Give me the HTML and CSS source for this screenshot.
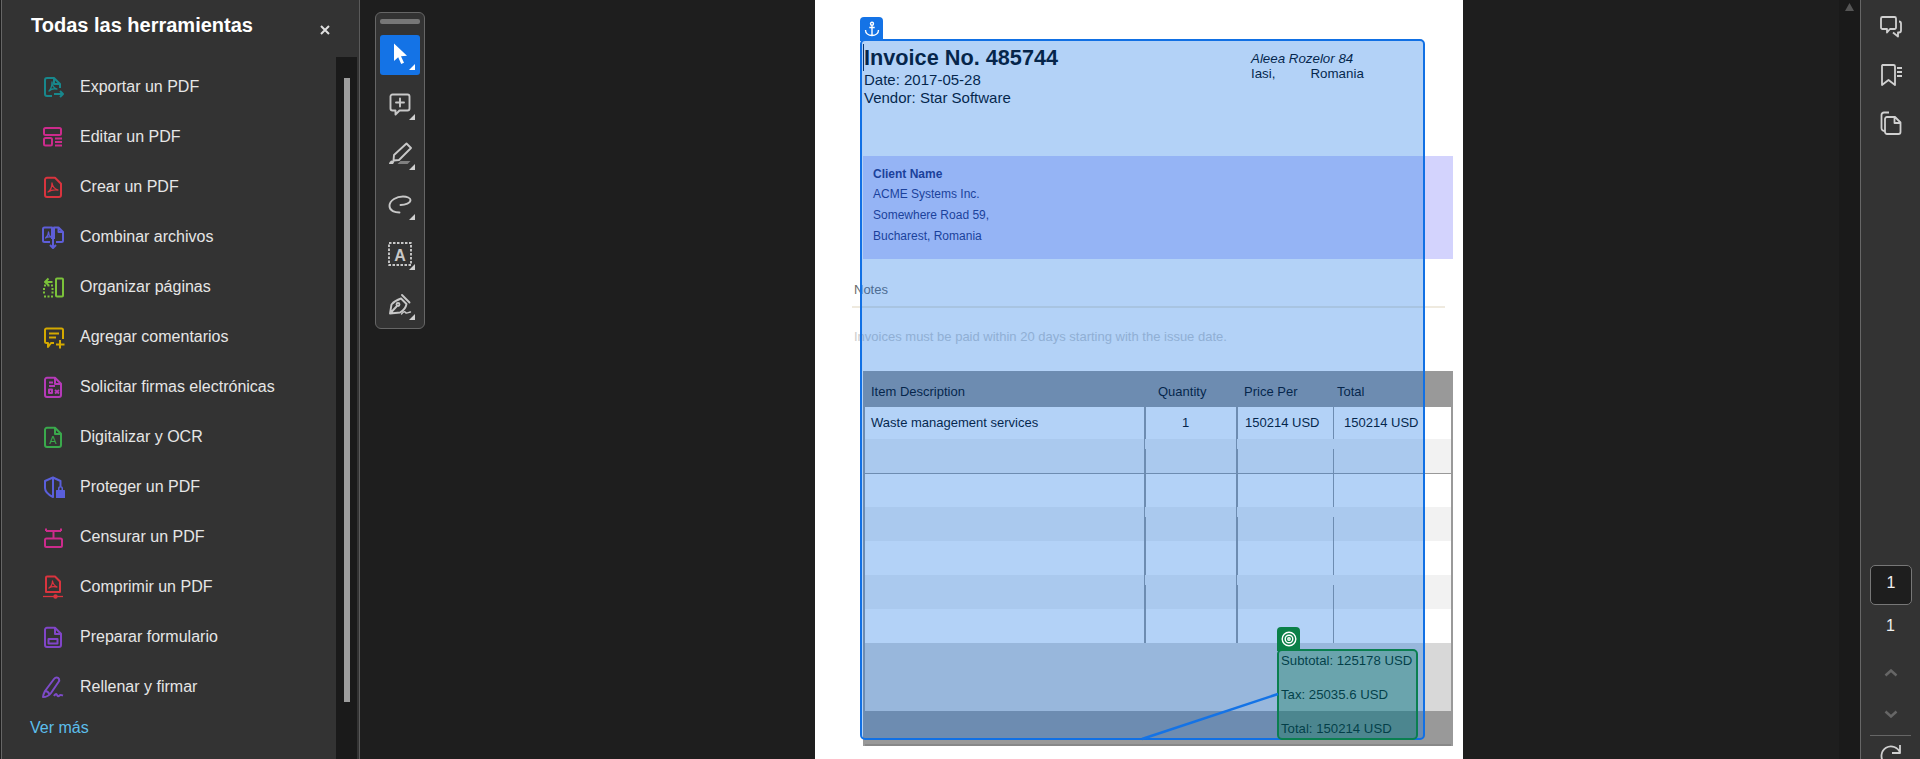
FILE: index.html

```html
<!DOCTYPE html>
<html lang="es">
<head>
    <meta charset="UTF-8">
    <title>Todas las herramientas</title>
    <link rel="stylesheet" href="styles.css">
</head>
<body>
    <aside class="sidebar">
        <div class="side-head">
            <h1 class="side-title">Todas las herramientas</h1>
            <svg class="close" viewBox="0 0 10 10"><path d="M1 1l8 8M9 1l-8 8"/></svg>
        </div>
        <div class="side-body">
            <div class="tool-list">
                <div class="tool-item">
                    <svg class="ico" style="color:#18878c" viewBox="0 0 24 24"><path d="M11 21H6a2 2 0 0 1-2-2V5a2 2 0 0 1 2-2h7l6 6v4M13 3v6h6"/><path class="thin" d="M8 16c2-2 3-6 3-9 0 3 2 6 5 7-3-.6-6 0-8 2z"/><path d="M13 19h9M19 16l3 3-3 3"/></svg>
                    <span>Exportar un PDF</span>
                </div>
                <div class="tool-item">
                    <svg class="ico" style="color:#cc2b8c" viewBox="0 0 24 24"><rect x="3" y="3" width="17" height="7" rx="1.5"/><rect x="3" y="13" width="8" height="7.5" rx="1.5"/><path d="M14 13.5h7M14 17h7M14 20.5h7"/></svg>
                    <span>Editar un PDF</span>
                </div>
                <div class="tool-item">
                    <svg class="ico" style="color:#d9343e" viewBox="0 0 24 24"><path d="M6 2.800h8l6 6V20a2 2 0 0 1-2 2H6a2 2 0 0 1-2-2V4.800a2 2 0 0 1 2-2z"/><path class="thin" d="M7 17c3-2 4-5 4-9 .5 4 3 6 6 7-3.500-.5-7 0-10 2z"/></svg>
                    <span>Crear un PDF</span>
                </div>
                <div class="tool-item">
                    <svg class="ico" style="color:#5e5ed8" viewBox="0 0 24 24"><path d="M9 17H3.500a1.500 1.500 0 0 1-1.500-1.500V4a1.500 1.500 0 0 1 1.500-1.500H11V14M15 17h5.500a1.500 1.500 0 0 0 1.500-1.500V7l-4.500-4.500H13V14M17.500 3v4H22"/><path class="thin" d="M4.500 13c2-1.500 3-3.500 3-6 0 2 1 4 2.500 5-2-.3-4 0-5.500 1z"/><path d="M12 12v11M9 20l3 3 3-3"/></svg>
                    <span>Combinar archivos</span>
                </div>
                <div class="tool-item">
                    <svg class="ico" style="color:#7bc23a" viewBox="0 0 24 24"><rect x="15" y="3.500" width="7" height="18" rx="1"/><path class="dots" d="M3 10.500h9M3 21.500h9M3 13v6M11.500 13v6"/><path d="M11.500 7H5M7.500 3.500 4 7l3.500 3"/></svg>
                    <span>Organizar páginas</span>
                </div>
                <div class="tool-item">
                    <svg class="ico" style="color:#d4a900" viewBox="0 0 24 24"><path d="M13 18H10l-3 4v-4H5.500A1.500 1.500 0 0 1 4 16.500V5a1.500 1.500 0 0 1 1.500-1.500h15A1.500 1.500 0 0 1 22 5v9"/><path d="M8 8.500h10M8 12.500h7M19 15v8.500M15 19.500h8.500"/></svg>
                    <span>Agregar comentarios</span>
                </div>
                <div class="tool-item">
                    <svg class="ico" style="color:#b53ab8" viewBox="0 0 24 24"><path d="M6 2.800h8l6 6V20a2 2 0 0 1-2 2H6a2 2 0 0 1-2-2V4.800a2 2 0 0 1 2-2z"/><path d="M14 3v6h6M8 7.500h4M8 11h6M8 14.500h3v3.500H8zM14 15l4 3.500M18 15l-4 3.500"/></svg>
                    <span>Solicitar firmas electrónicas</span>
                </div>
                <div class="tool-item">
                    <svg class="ico" style="color:#3aa94c" viewBox="0 0 24 24"><path d="M6 2.800h8l6 6V20a2 2 0 0 1-2 2H6a2 2 0 0 1-2-2V4.800a2 2 0 0 1 2-2z"/><path d="M14 3v6h6"/><text class="ico-letter" x="12" y="19" fill="currentColor">A</text></svg>
                    <span>Digitalizar y OCR</span>
                </div>
                <div class="tool-item">
                    <svg class="ico" style="color:#5a5fdb" viewBox="0 0 24 24"><path d="M12 2.500 19.500 6v5M12 2.500 4 6v7c0 4 4 7 8 9V2.500zM12 22"/><path class="fill" d="M15.500 15h8a.5.5 0 0 1 .5.5V23h-9v-7.500a.5.5 0 0 1 .5-.5zM17 15v-1.500a2.500 2.500 0 0 1 5 0V15h-1.500v-1.500a1 1 0 0 0-2 0V15z"/></svg>
                    <span>Proteger un PDF</span>
                </div>
                <div class="tool-item">
                    <svg class="ico" style="color:#cc2b8c" viewBox="0 0 24 24"><rect x="4" y="13.500" width="17" height="8.500" rx="1.500"/><path d="M5 6h15M12.500 6v7M5 3.500V6M20 3.500V6"/></svg>
                    <span>Censurar un PDF</span>
                </div>
                <div class="tool-item">
                    <svg class="ico" style="color:#d9343e" viewBox="0 0 24 24"><path d="M6 1.500h8l5 5V17H5V2.500a1 1 0 0 1 1-1z"/><path class="thin" d="M8 13c2-1.500 3.500-4 3.500-7 .5 3 2.500 5 4.500 6-3-.5-6-.5-8 1z"/><path class="thin" d="M2 21.500h20"/><circle class="fill" cx="14.500" cy="21.500" r="2.200"/></svg>
                    <span>Comprimir un PDF</span>
                </div>
                <div class="tool-item">
                    <svg class="ico" style="color:#8145c8" viewBox="0 0 24 24"><path d="M6 2.800h8l6 6V20a2 2 0 0 1-2 2H6a2 2 0 0 1-2-2V4.800a2 2 0 0 1 2-2z"/><path d="M14 3v6h6"/><rect x="7.500" y="14" width="9" height="4.500"/></svg>
                    <span>Preparar formulario</span>
                </div>
                <div class="tool-item">
                    <svg class="ico" style="color:#7d4bc8" viewBox="0 0 24 24"><path d="M2 22c0-2 1-4 2-6L13 4c1.500-2 4-2 5 0 .5 1 .3 2-.5 3L10 18c-1.500 2-5 4-8 4z"/><path d="M4 16c1.500 0 3.500 1 4.500 3.500M13 21c1-2 2.500-2.500 3-1s1.500 1.500 2.500.5 2-.5 3.500 0"/></svg>
                    <span>Rellenar y firmar</span>
                </div>
                <a class="see-more">Ver más</a>
            </div>
            <div class="side-track"><div class="side-thumb"></div></div>
        </div>
    </aside>

    <main class="viewer">
        <div class="toolbar">
            <div class="grip"></div>
            <div class="tool tool-on">
                <svg class="tb-ico" viewBox="0 0 24 24"><path class="fill" d="M6 1.500v17.500l4.200-3.800 3 6.800 2.800-1.300-3-6.500 6-.5z"/></svg>
            </div>
            <div class="tool">
                <svg class="tb-ico" viewBox="0 0 24 24"><path d="M4.500 2.500h15A2 2 0 0 1 21.500 4.500v12a2 2 0 0 1-2 2h-8L7.500 22.500v-4h-3a2 2 0 0 1-2-2v-12a2 2 0 0 1 2-2zM12 6.500v8M8 10.500h8"/></svg>
            </div>
            <div class="tool">
                <svg class="tb-ico" viewBox="0 0 24 24"><path d="M18.500 1.500 23 6 11 18 5.500 18.500 6 13z"/><path class="fill" d="M1 22c0-1.500 1.500-3.500 3-3.500l2.500 1L5 22z"/><path class="band" d="M9.500 22l3-3h10l-3 3z"/></svg>
            </div>
            <div class="tool">
                <svg class="tb-ico" viewBox="0 0 24 24"><path d="M11.500 20.500C7 20.500 1.500 19 1.500 14 1.500 8 9 4.500 15 4.500c4 0 7.500 1.500 7.500 3.500 0 3-5 5-10 5"/></svg>
            </div>
            <div class="tool">
                <svg class="tb-ico" viewBox="0 0 24 24"><rect class="dash" x="1" y="1" width="22" height="22"/><text class="tb-letter" x="12" y="18.500" fill="currentColor">A</text></svg>
            </div>
            <div class="tool">
                <svg class="tb-ico" viewBox="0 0 24 24"><path d="M2 21.500 3.500 12.500C6 9.500 10 7.500 13 6.500L18.500 12C18 15 15.500 18.500 12 20.500zM2 21.500 8.500 14.500M14 3 21.500 10.500"/><circle cx="10" cy="12.500" r="1.500"/><path class="thin" d="M13.500 22c2-2 3-3 4-1.500s2.500 0 5-.5"/></svg>
            </div>
        </div>

        <div class="page">
            <div class="inv-head">
                <div class="inv-info">
                    <h2 class="inv-no">Invoice No. 485744</h2>
                    <div>Date: 2017-05-28</div>
                    <div>Vendor: Star Software</div>
                </div>
                <div class="inv-addr">
                    <em>Aleea Rozelor 84</em>
                    <div class="addr-line"><span>Iasi,</span><span>Romania</span></div>
                </div>
            </div>

            <div class="client">
                <strong>Client Name</strong>
                <div>ACME Systems Inc.</div>
                <div>Somewhere Road 59,</div>
                <div>Bucharest, Romania</div>
            </div>

            <div class="notes">
                <div class="notes-title">Notes</div>
                <div class="notes-text">Invoices must be paid within 20 days starting with the issue date.</div>
            </div>

            <div class="inv-table">
                <div class="row row-head">
                    <div class="c1">Item Description</div>
                    <div class="c2">Quantity</div>
                    <div class="c3">Price Per</div>
                    <div class="c4">Total</div>
                </div>
                <div class="row row-first">
                    <div class="c1 cell">Waste management services</div>
                    <div class="c2 cell qty">1</div>
                    <div class="c3 cell price">150214 USD</div>
                    <div class="c4 cell line">150214 USD</div>
                </div>
                <div class="row alt"><div class="cell"></div><div class="cell"></div><div class="cell"></div><div class="cell"></div></div>
                <div class="row ruled"><div class="cell"></div><div class="cell"></div><div class="cell"></div><div class="cell"></div></div>
                <div class="row alt"><div class="cell"></div><div class="cell"></div><div class="cell"></div><div class="cell"></div></div>
                <div class="row"><div class="cell"></div><div class="cell"></div><div class="cell"></div><div class="cell"></div></div>
                <div class="row alt"><div class="cell"></div><div class="cell"></div><div class="cell"></div><div class="cell"></div></div>
                <div class="row"><div class="cell"></div><div class="cell"></div><div class="cell"></div><div class="cell"></div></div>
                <div class="sum">Subtotal: 125178 USD</div>
                <div class="sum">Tax: 25035.6 USD</div>
                <div class="sum sum-total">Total: 150214 USD</div>
            </div>

            <div class="sel-blue">
                <div class="tab tab-blue">
                    <svg viewBox="0 0 16 16"><circle cx="8" cy="2.700" r="1.500"/><path d="M8 4.200v10.300M5.300 6.500h5.400M1.500 9c0 3.500 3 5.500 6.500 5.500S14.500 12.500 14.500 9"/></svg>
                </div>
            </div>
            <div class="sel-green">
                <div class="tab tab-green">
                    <svg viewBox="0 0 16 16"><circle cx="8" cy="8" r="6.800"/><circle cx="8" cy="8" r="3.800"/><circle cx="8" cy="8" r="1.200"/></svg>
                </div>
            </div>
            <svg class="link-line" viewBox="0 0 648 759"><path d="M463 694 327 739"/></svg>
        </div>
    </main>

    <div class="scroll-strip"><div class="scroll-up"></div></div>

    <aside class="rail">
        <svg class="rail-ico" viewBox="0 0 24 24"><path d="M3.500 2h12A1.500 1.500 0 0 1 17 3.500v9a1.500 1.500 0 0 1-1.500 1.500H11l-3 3.500V14H3.500A1.500 1.500 0 0 1 2 12.500v-9A1.500 1.500 0 0 1 3.500 2z"/><path d="M20 6.500c1.200 0 2 .8 2 2v7c0 1-.8 2-2 2h-1v4l-5-4"/></svg>
        <svg class="rail-ico" viewBox="0 0 24 24"><path d="M3.500 2h11A1.500 1.500 0 0 1 16 3.500V22l-6.500-5L3 22V3.500A1.500 1.500 0 0 1 3.500 2z"/><path d="M18 5h5M18 9h5M18 13h5"/></svg>
        <svg class="rail-ico" viewBox="0 0 24 24"><path d="M6 20c-2 0-3.500-1-3.500-3V4c0-1.500 1-2.500 2.500-2.500h5"/><path d="M8 6h8l5.500 5.500V21a2 2 0 0 1-2 2H8a2 2 0 0 1-2-2V8a2 2 0 0 1 2-2zM15.500 6v6h6"/></svg>
        <div class="page-box">1</div>
        <div class="page-count">1</div>
        <svg class="chev" viewBox="0 0 14 8"><path d="M1.500 6.500 7 1.500l5.500 5"/></svg>
        <svg class="chev chev-down" viewBox="0 0 14 8"><path d="M1.500 1.500 7 6.500l5.500-5"/></svg>
        <div class="rail-rule"></div>
        <svg class="rail-ico refresh" viewBox="0 0 24 24"><path d="M21 11A9.500 9.500 0 1 0 20 19M21 3v8h-8"/></svg>
    </aside>
</body>
</html>
```

FILE: styles.css

```css
* {
    box-sizing: border-box;
}
body {
    margin: 0;
    height: 100vh;
    overflow: hidden;
    display: flex;
    background: #1e1e1e;
    font-family: "Liberation Sans", Arial, sans-serif;
}

/* left panel */
.sidebar {
    width: 359px;
    margin-left: 1px;
    flex: none;
    display: flex;
    flex-direction: column;
    background: #333;
    border-left: 1px solid #666;
    border-right: 1px solid #5a5a5a;
}
.side-head {
    height: 57px;
    flex: none;
    display: flex;
    justify-content: space-between;
    padding: 12px 29px 0 29px;
}
.side-title {
    margin: 0;
    font-size: 20px;
    line-height: 26px;
    color: #fff;
}
.close {
    width: 10px;
    height: 10px;
    margin-top: 13px;
    fill: none;
    stroke: #e0e0e0;
    stroke-width: 2;
}
.side-body {
    flex: 1;
    display: flex;
    justify-content: space-between;
    padding-right: 2px;
}
.tool-list {
    padding: 5px 0 0 28px;
}
.tool-item {
    height: 50px;
    display: flex;
    align-items: center;
    gap: 15px;
    padding-left: 11px;
    font-size: 16px;
    color: #e6e6e6;
}
.ico {
    width: 24px;
    height: 24px;
    margin-top: -1px;
    fill: none;
    stroke: currentColor;
    stroke-width: 2;
    stroke-linejoin: round;
}
.ico .thin {
    stroke-width: 1.300;
}
.ico .fill {
    fill: currentColor;
    stroke: none;
}
.ico .dots {
    stroke-dasharray: 2 1.500;
}
.ico-letter {
    font-size: 11px;
    text-anchor: middle;
    stroke: none;
}
.see-more {
    display: block;
    margin-top: 7px;
    font-size: 16px;
    line-height: 18px;
    color: #5cbfec;
}
.side-track {
    width: 21px;
    background: #1a1a1a;
    padding: 21px 0 0 8px;
}
.side-thumb {
    width: 6px;
    height: 624px;
    background: #9d9d9d;
}

/* viewer */
.viewer {
    flex: 1;
    display: flex;
    align-items: flex-start;
    padding-left: 15px;
}
.toolbar {
    width: 50px;
    height: 317px;
    margin-top: 12px;
    flex: none;
    display: flex;
    flex-direction: column;
    align-items: center;
    gap: 10px;
    padding-top: 6px;
    background: #333;
    border: 1px solid #666;
    border-radius: 6px;
}
.grip {
    width: 40px;
    height: 5px;
    margin-bottom: 1px;
    border-radius: 2px;
    background: #777;
}
.tool {
    position: relative;
    width: 40px;
    height: 40px;
    flex: none;
    display: flex;
    align-items: center;
    justify-content: center;
    border-radius: 3px;
    color: #c8c8c8;
}
.tool::after {
    content: "";
    position: absolute;
    right: 5px;
    bottom: 5px;
    width: 6px;
    height: 6px;
    background: #d0d0d0;
    clip-path: polygon(100% 0, 100% 100%, 0 100%);
}
.tool-on {
    background: #1473e6;
    color: #fff;
}
.tool-on::after {
    background: #fff;
}
.tb-ico {
    width: 24px;
    height: 24px;
    margin: -2px 1px 0 0;
    fill: none;
    stroke: currentColor;
    stroke-width: 1.900;
    stroke-linejoin: round;
    stroke-linecap: round;
}
.tb-ico .fill {
    fill: currentColor;
    stroke: none;
}
.tb-ico .band {
    fill: #808080;
    stroke: none;
}
.tb-ico .thin {
    stroke-width: 1.400;
}
.tb-ico .dash {
    stroke-dasharray: 2.500 1.500;
    stroke-linecap: butt;
}
.tb-letter {
    font-size: 16px;
    font-weight: bold;
    text-anchor: middle;
    stroke: none;
}

/* document page */
.page {
    position: relative;
    width: 648px;
    height: 100vh;
    margin-left: 390px;
    flex: none;
    overflow: hidden;
    background: #fff;
    color: #000;
}
.inv-head {
    height: 156px;
    display: flex;
    padding: 44px 0 0 49px;
}
.inv-info {
    width: 387px;
    font-size: 15px;
    line-height: 18px;
}
/* the left border stands in for the text caret */
.inv-no {
    margin: 0 0 0 -1px;
    border-left: 1px solid #0a1a3a;
    font-size: 21.700px;
    line-height: 27px;
}
.inv-addr {
    padding-top: 7px;
    font-size: 13.330px;
    line-height: 15px;
}
.addr-line {
    display: flex;
    gap: 35px;
}
.client {
    width: 590px;
    height: 103px;
    margin-left: 48px;
    padding: 8px 0 0 10px;
    background: #d3d3fd;
    color: #1f2a78;
    font-size: 12px;
    line-height: 21px;
}
.client strong {
    display: block;
    line-height: 20px;
}
.notes {
    height: 112px;
    padding-top: 23px;
    font-size: 13px;
    line-height: 16px;
}
.notes-title {
    width: 593px;
    height: 26px;
    margin-left: 37px;
    padding-left: 2px;
    border-bottom: 2px solid #efeadf;
    color: #6a6a6a;
}
.notes-text {
    margin: 21px 0 0 39px;
    color: #ccc;
}
.inv-table {
    width: 590px;
    margin-left: 48px;
    border-left: 2px solid #999;
    border-right: 2px solid #999;
    font-size: 13px;
}
.row {
    height: 34px;
    display: grid;
    grid-template-columns: 279px 92px 97px 118px;
}
.row-head {
    height: 36px;
    padding-top: 4px;
    background: #999;
    line-height: 34px;
}
.row-head .c1 { padding-left: 6px; }
.row-head .c2 { padding-left: 14px; }
.row-head .c3 { padding-left: 8px; }
.row-head .c4 { padding-left: 4px; }
.row-first {
    height: 32px;
    line-height: 32px;
}
.row-first .c1 { padding-left: 6px; }
.qty { padding-left: 38px; }
.price { padding-left: 9px; }
.line { padding-left: 11px; }
.cell + .cell {
    background: linear-gradient(#999, #999) 0 0 / 2px 100% no-repeat;
}
.cell:last-child {
    background-size: 1px 100%;
}
.alt {
    background: #f2f2f2;
}
/* the column lines thin out over the first 10px of each shaded row */
.alt .cell + .cell {
    background:
        linear-gradient(#999, #999) 0 0 / 1px 100% no-repeat,
        linear-gradient(#999, #999) 0 10px / 2px 100% no-repeat;
}
.alt .cell:last-child {
    background: linear-gradient(#999, #999) 0 10px / 1px 100% no-repeat;
}
.ruled {
    border-top: 1px solid #999;
}
.sum {
    height: 34px;
    padding-left: 416px;
    background: #d8d8d8;
    font-size: 13.200px;
    line-height: 36px;
}
.sum-total {
    height: 35px;
    background: #999;
    border-bottom: 2px solid #888;
}

/* selection overlays on the page */
.sel-blue,
.sel-green {
    position: absolute;
    border-style: solid;
    border-width: 2px;
    border-radius: 5px;
}
.sel-blue {
    left: 45px;
    top: 39px;
    width: 565px;
    height: 701px;
    border-color: #1170e4;
    background: rgba(20, 115, 230, 0.32);
}
.sel-green {
    left: 462px;
    top: 649px;
    width: 141px;
    height: 91px;
    border-color: #0a7f50;
    background: rgba(0, 121, 66, 0.3);
}
.tab {
    position: absolute;
    left: -2px;
    top: -24px;
    width: 23px;
    height: 24px;
    display: flex;
    align-items: center;
    justify-content: center;
    border-radius: 4px 4px 0 0;
}
.tab svg {
    width: 16px;
    height: 16px;
    fill: none;
    stroke: #fff;
    stroke-width: 1.400;
}
.tab-blue {
    background: #1473e6;
}
.tab-green {
    background: #0a8048;
}
.link-line {
    position: absolute;
    left: 0;
    top: 0;
    width: 648px;
    height: 759px;
    fill: none;
    stroke: #1473e6;
    stroke-width: 2.500;
}

/* right side */
.scroll-strip {
    width: 21px;
    flex: none;
    background: #1a1a1a;
    padding: 3px 0 0 6px;
}
.scroll-up {
    width: 9px;
    height: 8px;
    background: #555;
    clip-path: polygon(50% 0, 100% 100%, 0 100%);
}
.rail {
    width: 60px;
    height: 100vh;
    flex: none;
    display: flex;
    flex-direction: column;
    align-items: center;
    padding: 15px 0 0 0;
    background: #333;
    border-left: 1px solid #666;
    color: #d0d0d0;
    overflow: hidden;
}
.rail-ico {
    width: 24px;
    height: 24px;
    margin-bottom: 24px;
    flex: none;
    fill: none;
    stroke: currentColor;
    stroke-width: 1.800;
    stroke-linejoin: round;
}
.page-box {
    width: 42px;
    height: 40px;
    margin: 406px 0 0 1px;
    flex: none;
    text-align: center;
    background: #1e1e1e;
    border: 1px solid #777;
    border-radius: 5px;
    font-size: 16px;
    line-height: 33px;
    color: #f0f0f0;
}
.page-count {
    height: 20px;
    margin-top: 11px;
    font-size: 16px;
    line-height: 20px;
    color: #f0f0f0;
}
.chev {
    width: 14px;
    height: 8px;
    margin-top: 33px;
    flex: none;
    fill: none;
    stroke: #666;
    stroke-width: 2.500;
}
.chev-down {
    margin-top: 33px;
}
.rail-rule {
    width: 41px;
    height: 1px;
    margin-top: 17px;
    flex: none;
    background: #666;
}
.refresh {
    margin-top: 6px;
}
```
